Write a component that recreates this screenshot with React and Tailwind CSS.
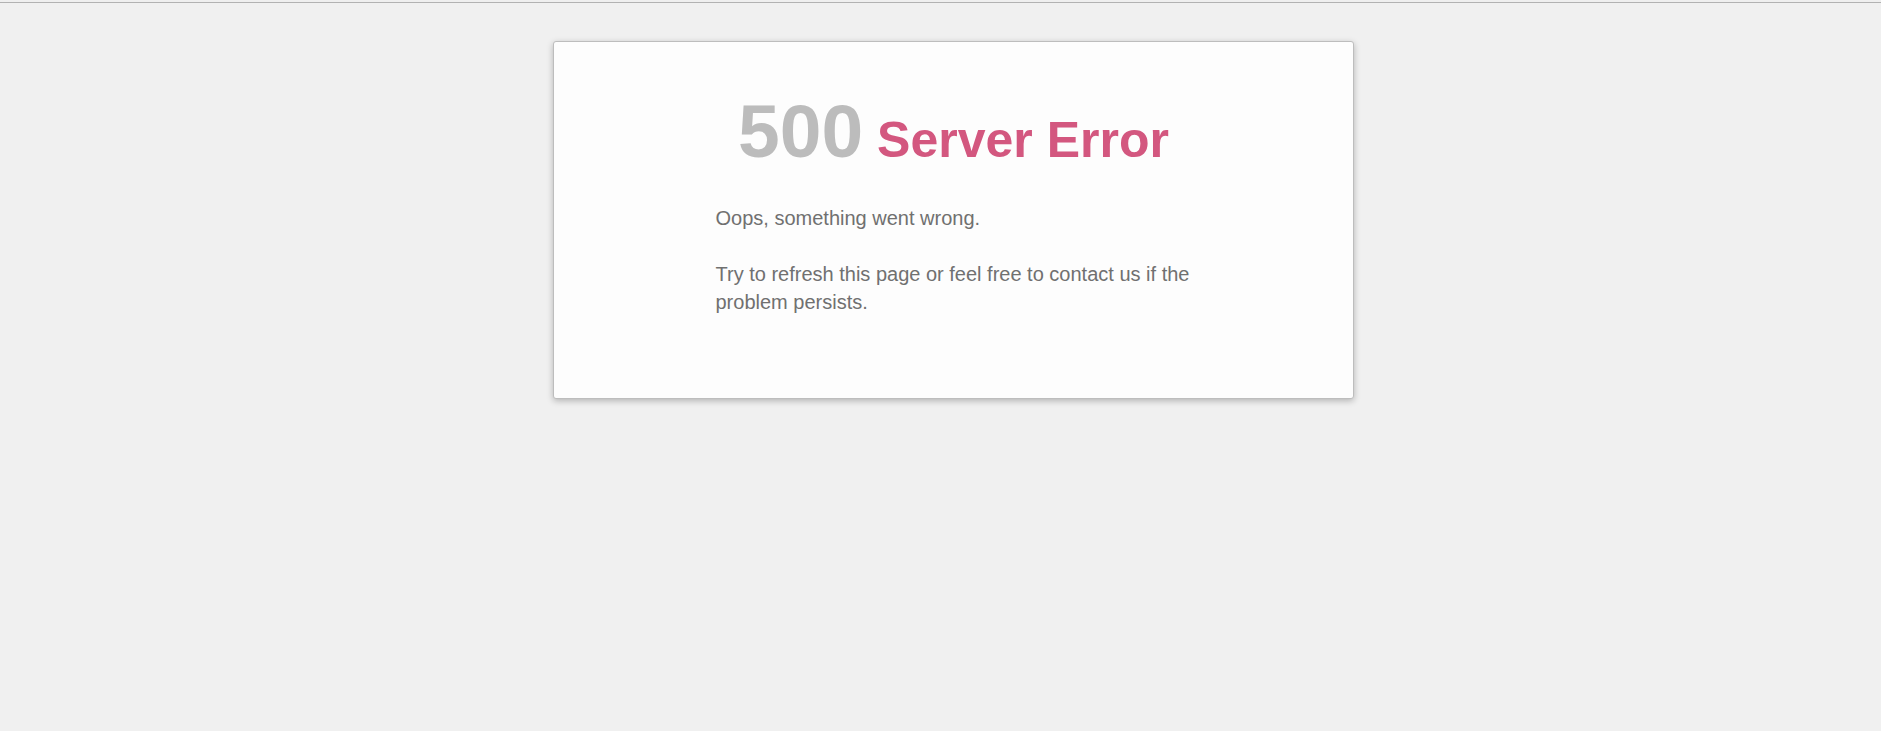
import React from 'react';

const App = () => {
  return (
    <div className="min-h-screen bg-[#f0f0f0] font-['Liberation_Sans',Arial,sans-serif]">
      <div className="h-[2px] bg-[#efefef]" />
      <div className="h-px bg-[#b2b2b2]" />
      <div className="flex justify-center pl-[26px] pt-[38px]">
        <div className="w-[801px] h-[358px] bg-[#fdfdfd] border border-[#bdbdbd] rounded-[3px] shadow-[0_2px_6px_rgba(0,0,0,0.25)] pt-[52px]">
          <h1 className="text-center font-bold leading-[75px] text-[75px] text-[#bcbcbc]">
            500<span className="text-[50px] text-[#d3577f]"> Server Error</span>
          </h1>
          <div className="w-[476px] mx-auto mt-[26px] text-[20px] leading-[28px] text-[#707070]">
            <p className="mb-[28px]">Oops, something went wrong.</p>
            <p>Try to refresh this page or feel free to contact us if the problem persists.</p>
          </div>
        </div>
      </div>
    </div>
  );
};

export default App;
